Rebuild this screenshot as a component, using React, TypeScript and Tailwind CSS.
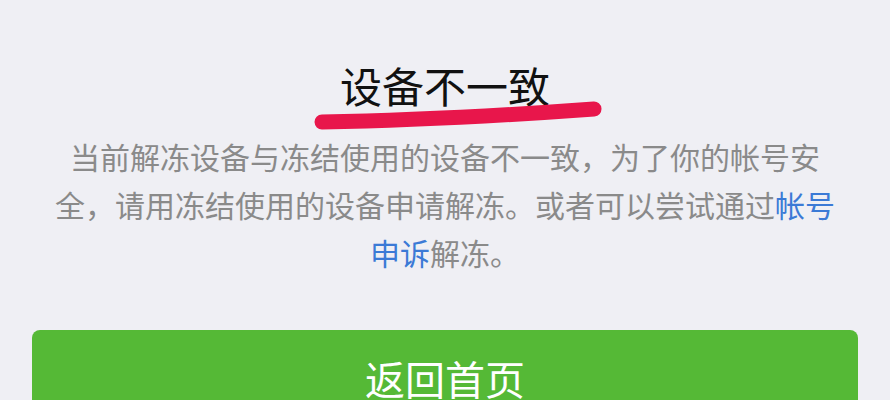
import React from 'react';

export default function App() {
    return (
        <div
            className="w-[890px] h-[400px] overflow-hidden bg-[#efeff4] flex flex-col items-center"
            style={{ fontFamily: '"Noto Sans CJK SC", "Noto Sans", sans-serif' }}
        >
            {/* Title with hand-drawn red underline */}
            <div className="relative mt-[64px]">
                <h1 className="text-[42px] leading-[42px] text-[#111] font-normal">设备不一致</h1>
                <svg
                    className="absolute left-[-26px] top-[34px] w-[300px] h-[40px]"
                    viewBox="0 0 300 40"
                    fill="none"
                >
                    <path
                        d="M8 24 Q 130 22 280 11"
                        stroke="#e8164b"
                        strokeWidth="15"
                        strokeLinecap="round"
                    />
                </svg>
            </div>

            <p className="mt-[26px] w-[790px] text-center text-[30px] leading-[48px] text-[#8a8a8a]">
                当前解冻设备与冻结使用的设备不一致，为了你的帐号安全，请用冻结使用的设备申请解冻。或者可以尝试通过
                <span className="text-[#3b7ad6]">帐号申诉</span>解冻。
            </p>

            <button className="mt-[54px] w-[826px] h-[96px] shrink-0 rounded-[8px] bg-[#55b936] text-white text-[40px] leading-none">
                返回首页
            </button>
        </div>
    );
}
